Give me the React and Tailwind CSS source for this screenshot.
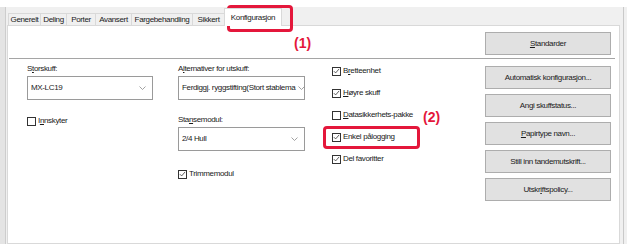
import React from "react";

const tabs = [
  { label: "Generelt", w: "w-[33px]" },
  { label: "Deling", w: "w-[27px]" },
  { label: "Porter", w: "w-[30px]" },
  { label: "Avansert", w: "w-[37px]" },
  { label: "Fargebehandling", w: "w-[62px]" },
  { label: "Sikkert", w: "w-[33px]" },
];

const Chevron = () => (
  <svg width="7" height="4" viewBox="0 0 7 4" className="shrink-0">
    <path d="M0.5 0.5 L3.5 3.5 L6.5 0.5" fill="none" stroke="#8a8a8a" strokeWidth="0.8" />
  </svg>
);

const Select = ({ value, className = "" }) => (
  <div className={"h-[24px] bg-white border border-[#9a9a9a] flex items-center justify-between gap-[3px] pl-[3px] pr-[6px] " + className}>
    <span className="whitespace-nowrap">{value}</span>
    <Chevron />
  </div>
);

const Check = ({ checked, children }) => (
  <div className="h-[10px] flex items-center gap-[2px] whitespace-nowrap">
    <div className="w-[9px] h-[9px] border border-[#333] bg-white flex items-center justify-center shrink-0">
      {checked && (
        <svg width="8" height="8" viewBox="0 0 8 8">
          <path d="M1 4.2 L3 6.2 L7 1.6" fill="none" stroke="#333" strokeWidth="0.9" />
        </svg>
      )}
    </div>
    <span>{children}</span>
  </div>
);

const Button = ({ children }) => (
  <div className="h-[23px] bg-[#e1e1e1] border border-[#adadad] flex items-center justify-center whitespace-nowrap">
    {children}
  </div>
);

export default function App() {
  return (
    <div className="relative w-[627px] h-[244px] overflow-hidden bg-white font-['Liberation_Sans',Arial,sans-serif] text-[8px] leading-[10px] tracking-[-0.35px] text-[#1a1a1a]">
      <div className="mt-[7px] flex h-[237px]">
        <div className="w-[6px] bg-[#e4e4e4] border-r border-[#cdcdcd]" />

        <div className="w-[617px] bg-[#f0f0f0] flex flex-col pl-px pr-[3px]">
          {/* tab strip */}
          <div className="h-[18px] flex items-end pl-px">
            {tabs.map((t) => (
              <div key={t.label} className={t.w + " h-[12px] border border-b-0 border-[#d9d9d9] -ml-px first:ml-0 flex items-center justify-center whitespace-nowrap"}>
                {t.label}
              </div>
            ))}
            <div className="relative z-10 -ml-[1px] -mb-px w-[58px] h-[18px] bg-white border border-b-0 border-[#d9d9d9] flex items-start justify-center pt-[4px] whitespace-nowrap">
              Konfigurasjon
            </div>
          </div>

          {/* tab page */}
          <div className="flex-1 bg-white border border-[#d9d9d9] flex flex-col">
            <div className="flex justify-end pr-[8px] pt-[6px]">
              <div className="w-[126px]">
                <Button><span><u>S</u>tandarder</span></Button>
              </div>
            </div>
            <div className="mt-[3px] ml-px mr-[4px] border-t border-[#a5a5a5]" />

            <div className="flex pl-[19px] pr-[8px]">
              <div className="w-[126px] flex flex-col">
                <div className="mt-[5px] h-[10px]">S<u>t</u>orskuff:</div>
                <Select value="MX-LC19" className="mt-[2px]" />
                <div className="mt-[16px]">
                  <Check>I<u>n</u>nskyter</Check>
                </div>
              </div>

              <div className="ml-[25px] w-[127px] flex flex-col">
                <div className="mt-[5px] h-[10px]">A<u>l</u>ternativer for utskuff:</div>
                <Select value="Ferdiggj. ryggstifting(Stort stablema" className="mt-[2px]" />
                <div className="mt-[15px] h-[10px]">Sta<u>n</u>semodul:</div>
                <Select value="2/4 Hull" className="mt-[2px]" />
                <div className="mt-[18px]">
                  <Check checked>Trimmemodul</Check>
                </div>
              </div>

              <div className="ml-[27px] flex-1 flex flex-col gap-[12px] pt-[7px]">
                <Check checked>B<u>r</u>etteenhet</Check>
                <Check checked><u>H</u>øyre skuff</Check>
                <Check><u>D</u>atasikkerhets-pakke</Check>
                <Check checked>Enkel pålogging</Check>
                <Check checked>Del favoritter</Check>
              </div>

              <div className="w-[126px] flex flex-col gap-[5px] pt-[7px]">
                <Button>Automatisk konfigurasjon...</Button>
                <Button>Angi skuffstatus...</Button>
                <Button><span><u>P</u>apirtype navn...</span></Button>
                <Button>Still inn tandemutskrift...</Button>
                <Button><span>Utskr<u>i</u>ftspolicy...</span></Button>
              </div>
            </div>
          </div>
        </div>

        <div className="w-[4px] bg-[#f0f0f0] border-l border-[#c9c9c9]" />
      </div>

      {/* annotations */}
      <div className="absolute left-[227px] top-[5px] w-[66px] h-[27px] border-[3px] border-[#e4173b] rounded-[4px]" />
      <div className="absolute left-[294px] top-[35px] text-[14px] leading-[16px] tracking-normal font-bold text-[#e4173b]">(1)</div>
      <div className="absolute left-[323px] top-[126px] w-[97px] h-[23px] border-[3px] border-[#e4173b] rounded-[4px]" />
      <div className="absolute left-[423px] top-[109px] text-[14px] leading-[16px] tracking-normal font-bold text-[#e4173b]">(2)</div>
    </div>
  );
}
